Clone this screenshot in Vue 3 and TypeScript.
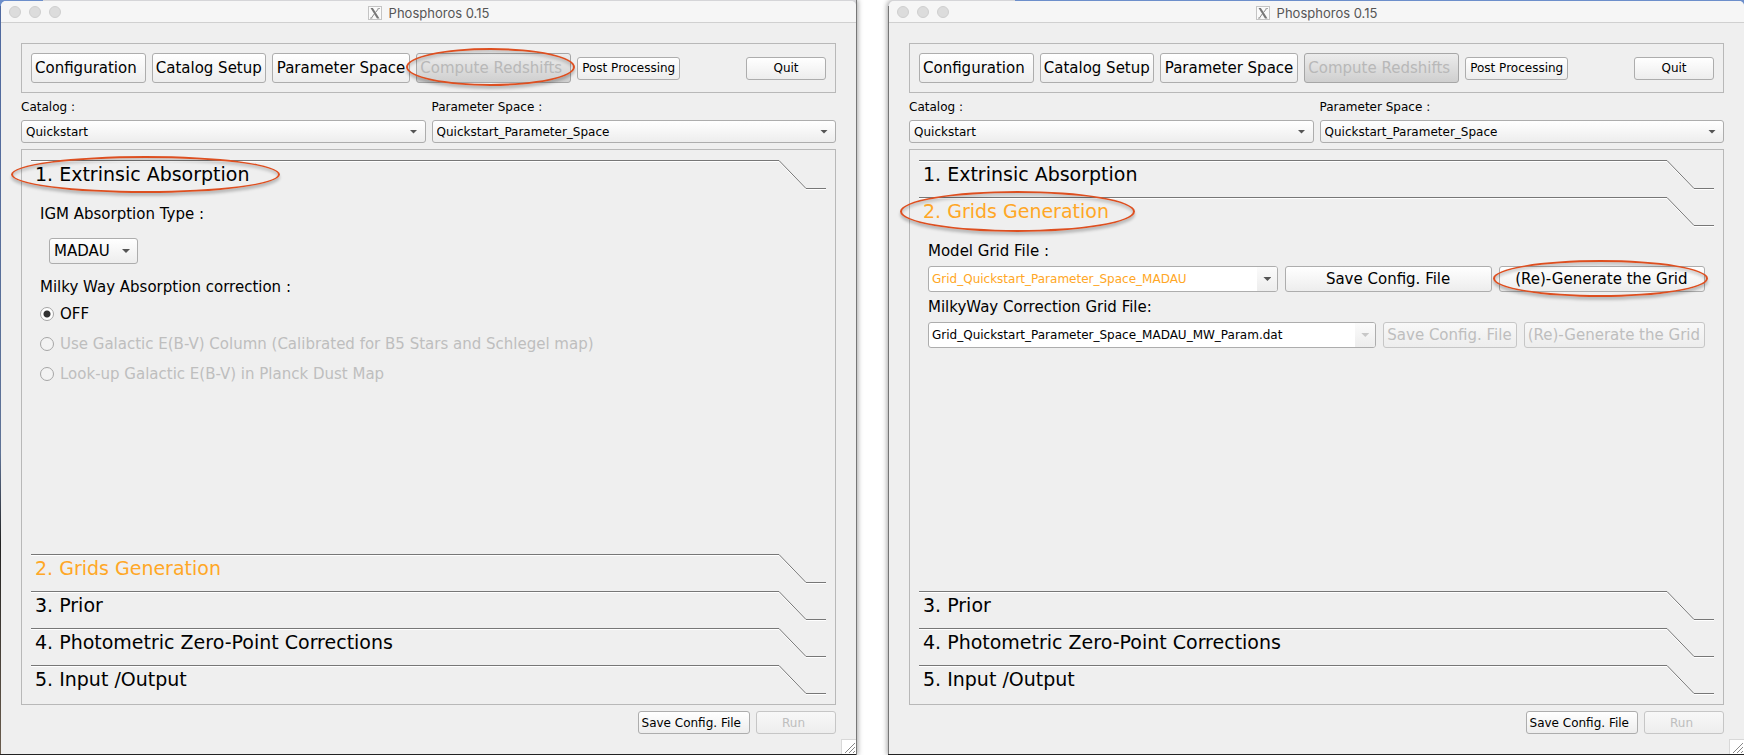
<script setup lang="ts">
import { reactive } from 'vue'

interface AppWindow {
  id: string
  open: number
  highlightNav: boolean
  igm: string
  milkyWay: string
}

const windows = reactive<AppWindow[]>([
  { id: 'left', open: 1, highlightNav: true, igm: 'MADAU', milkyWay: 'off' },
  { id: 'right', open: 2, highlightNav: false, igm: 'MADAU', milkyWay: 'off' },
])

const sections = [
  { n: 1, title: '1. Extrinsic Absorption', warn: false },
  { n: 2, title: '2. Grids Generation', warn: true },
  { n: 3, title: '3. Prior', warn: false },
  { n: 4, title: '4. Photometric Zero-Point Corrections', warn: false },
  { n: 5, title: '5. Input /Output', warn: false },
]

const corrections = [
  { value: 'off', label: 'OFF', disabled: false },
  { value: 'column', label: 'Use Galactic E(B-V) Column (Calibrated for B5 Stars and Schlegel map)', disabled: true },
  { value: 'planck', label: 'Look-up Galactic E(B-V) in Planck Dust Map', disabled: true },
]
</script>

<template>
  <main class="desktop">
    <div v-for="w in windows" :key="w.id" class="frame" :class="w.id">
      <section class="window" aria-label="Phosphoros 0.15">
        <header class="titlebar">
          <div class="lights">
            <button type="button" aria-label="Close"></button>
            <button type="button" aria-label="Minimize"></button>
            <button type="button" aria-label="Zoom"></button>
          </div>
          <div class="title">
            <svg width="14" height="14" viewBox="0 0 14 14" aria-hidden="true">
              <rect x="0.5" y="0.5" width="13" height="13" fill="#fafafa" stroke="#c4c4c4" />
              <path d="M2.5 2h2.4l6.6 10.500H9z" fill="#777" />
              <path d="M11 2 7.600 6.400M6.400 7.800 3 12.500" stroke="#888" fill="none" />
              <path d="M9.600 2.500h2.400M2 12h2.400" stroke="#aaa" />
            </svg>
            <span>Phosphoros 0.15</span>
          </div>
        </header>

        <div class="content">
          <nav class="toolbar">
            <button type="button" class="btn nav trail">Configuration</button>
            <button type="button" class="btn nav">Catalog Setup</button>
            <button type="button" class="btn nav roomy">Parameter Space</button>
            <div class="anchor">
              <button type="button" class="btn nav trail current" disabled>Compute Redshifts</button>
              <span v-if="w.highlightNav" class="ring ring-nav"></span>
            </div>
            <button type="button" class="btn small roomy">Post Processing</button>
            <button type="button" class="btn small wide quit">Quit</button>
          </nav>

          <div class="pickers">
            <div class="picker">
              <label :for="w.id + '-catalog'">Catalog :</label>
              <div class="select">
                <select :id="w.id + '-catalog'"><option>Quickstart</option></select>
              </div>
            </div>
            <div class="picker">
              <label :for="w.id + '-space'">Parameter Space :</label>
              <div class="select">
                <select :id="w.id + '-space'"><option>Quickstart_Parameter_Space</option></select>
              </div>
            </div>
          </div>

          <div class="toolbox">
            <template v-for="s in sections" :key="s.n">
              <button type="button" class="tab" :class="{ warn: s.warn }" :aria-expanded="w.open === s.n" @click="w.open = s.n">
                <span class="tab-title">{{ s.title }}</span>
                <svg class="tab-edge" width="48" height="30" viewBox="0 0 48 30" aria-hidden="true">
                  <path d="M0 1.5h1l27 28h20" stroke="#fff" fill="none" />
                  <path d="M0 .5h1l27 28h20" stroke="#777" fill="none" />
                </svg>
                <span v-if="w.open === s.n" class="ring" :class="'ring-tab' + s.n"></span>
              </button>

              <div v-if="w.open === s.n" class="page">
                <template v-if="s.n === 1">
                  <label class="text" :for="w.id + '-igm'">IGM Absorption Type :</label>
                  <div class="select igm">
                    <select :id="w.id + '-igm'" v-model="w.igm"><option>MADAU</option></select>
                  </div>
                  <fieldset class="radios">
                    <legend class="text">Milky Way Absorption correction :</legend>
                    <label v-for="c in corrections" :key="c.value" :class="{ off: c.disabled }">
                      <input v-model="w.milkyWay" type="radio" :name="w.id + '-mw'" :value="c.value" :disabled="c.disabled" />
                      {{ c.label }}
                    </label>
                  </fieldset>
                </template>

                <template v-else-if="s.n === 2">
                  <label class="text" :for="w.id + '-grid'">Model Grid File :</label>
                  <div class="row even">
                    <div class="combo">
                      <input :id="w.id + '-grid'" class="warn" type="text" value="Grid_Quickstart_Parameter_Space_MADAU" />
                      <button type="button" aria-label="Show model grid files"></button>
                    </div>
                    <button type="button" class="btn mid">Save Config. File</button>
                    <div class="anchor">
                      <button type="button" class="btn mid">(Re)-Generate the Grid</button>
                      <span class="ring ring-generate"></span>
                    </div>
                  </div>
                  <label class="text" :for="w.id + '-mwgrid'">MilkyWay Correction Grid File:</label>
                  <div class="row">
                    <div class="combo">
                      <input :id="w.id + '-mwgrid'" type="text" value="Grid_Quickstart_Parameter_Space_MADAU_MW_Param.dat" />
                      <button type="button" aria-label="Show correction grid files" disabled></button>
                    </div>
                    <button type="button" class="btn mid" disabled>Save Config. File</button>
                    <button type="button" class="btn mid" disabled>(Re)-Generate the Grid</button>
                  </div>
                </template>
              </div>
            </template>
          </div>

          <footer class="actions">
            <button type="button" class="btn small trail">Save Config. File</button>
            <button type="button" class="btn small wide trail" disabled>Run</button>
          </footer>
        </div>

        <svg class="grip" width="15" height="15" viewBox="0 0 15 15" aria-hidden="true">
          <rect width="15" height="15" fill="#fff" />
          <path d="M0 .5h15M.5 0v15" stroke="#d8d8d8" />
          <path d="M4 14 14 4M8 14l6-6M12 14l2-2" stroke="#888" fill="none" />
        </svg>
      </section>
    </div>
  </main>
</template>

<style>
body {
  margin: 0;
  background: #fff;
}
</style>

<style scoped>
* {
  box-sizing: border-box;
}

.desktop {
  display: grid;
  grid-template-columns: 1fr 1fr;
  gap: 32px;
  min-height: 100vh;
  font: 12px/16px "DejaVu Sans", sans-serif;
  color: #000;
}

button,
select,
input {
  margin: 0;
  font: inherit;
  color: inherit;
}

.frame {
  display: flex;
  padding: 1px 0 1px 1px;
  box-shadow: 1px 0 #777, 2px 0 5px rgba(0, 0, 0, 0.35);
}

.frame.left {
  background:
    linear-gradient(#222, #222) bottom / 100% 1px no-repeat,
    linear-gradient(90deg, #6d8fcb 43px, #d5d5d8 43px) top / 100% 6px no-repeat,
    linear-gradient(#4f69a0, #5f7396 60%, #222 72%, #6b5d4e);
}

.frame.right {
  background:
    linear-gradient(#222, #222) bottom / 100% 1px no-repeat,
    linear-gradient(90deg, #d5d5d8 127px, #6d8fcb 127px) top / 100% 6px no-repeat,
    #777;
  border-top-left-radius: 6px;
  box-shadow: -1px 0 5px rgba(0, 0, 0, 0.35);
}

.window {
  position: relative;
  flex: 1;
  display: flex;
  flex-direction: column;
  min-width: 0;
  background: #efefef;
  border-radius: 5px 5px 0 0;
}

.titlebar {
  display: grid;
  grid-template-columns: 1fr auto 1fr;
  align-items: center;
  height: 22px;
  background: #f6f6f6;
  border-bottom: 1px solid #d0d0d0;
  border-radius: 5px 5px 0 0;
}

.lights {
  display: flex;
  gap: 8px;
  padding-left: 8px;
}

.lights button {
  width: 12px;
  height: 12px;
  padding: 0;
  border: 1px solid #cfcfcf;
  border-radius: 50%;
  background: #dcdcdc;
}

.title {
  display: flex;
  align-items: center;
  gap: 7px;
  padding-top: 2px;
  font: 13px/16px Inter, sans-serif;
  color: #555;
}

.content {
  flex: 1;
  display: flex;
  flex-direction: column;
  padding: 20px;
}

.toolbar {
  display: flex;
  align-items: center;
  gap: 6px;
  height: 50px;
  padding: 0 9px;
  border: 1px solid #b8b8b8;
}

.btn {
  padding: 0 3px;
  border: 1px solid #adadad;
  border-radius: 3px;
  background: linear-gradient(#fff, #ededed);
  white-space: nowrap;
}

.btn:disabled {
  border-color: #c6c6c6;
  background: linear-gradient(#f8f8f8, #ededed);
  color: #bebebe;
}

.nav {
  height: 30px;
  font-size: 15px;
}

.trail {
  padding-right: 8px;
}

.roomy {
  padding: 0 4px;
}

.nav.current {
  border-color: #a6a6a6;
  background: linear-gradient(#ececec, #cfcfcf);
  color: #b8b8b8;
}

.small {
  height: 23px;
}

.mid {
  height: 26px;
  padding: 0 4px 0 3px;
  font-size: 15px;
}

.wide {
  width: 80px;
}

.quit {
  margin-left: auto;
}

.anchor {
  position: relative;
  display: grid;
}

.pickers {
  display: grid;
  grid-template-columns: 1fr 1fr;
  gap: 6px;
  margin-top: 6px;
}

.picker {
  display: grid;
  gap: 5px;
}

.select {
  position: relative;
  display: grid;
}

.select select {
  appearance: none;
  height: 23px;
  padding: 0 22px 0 4px;
  border: 1px solid #adadad;
  border-radius: 3px;
  background: linear-gradient(#fff, #ededed);
}

.select::after,
.combo button::after {
  content: "";
  width: 8px;
  height: 4px;
  background: #555;
  clip-path: polygon(0 0, 100% 0, 50% 100%);
}

.select::after {
  position: absolute;
  top: calc(50% - 2px);
  right: 8px;
  pointer-events: none;
}

.toolbox {
  flex: 1;
  display: flex;
  flex-direction: column;
  margin-top: 6px;
  padding: 10px 9px 2px;
  border: 1px solid #b8b8b8;
}

.tab {
  position: relative;
  display: flex;
  height: 37px;
  padding: 0;
  border: 0;
  background: none;
  text-align: left;
}

.tab-title {
  flex: 1;
  height: 26px;
  padding: 2px 4px 0;
  border-top: 1px solid #777;
  box-shadow: inset 0 1px #fff;
  font-size: 19px;
  line-height: 22px;
}

.warn {
  color: #ffa726;
}

.page {
  flex: 1;
  display: flex;
  flex-direction: column;
  align-items: stretch;
  gap: 6px;
  padding: 8px 9px 0;
  font-size: 15px;
}

.text {
  padding: 0;
  line-height: 18px;
}

.igm {
  align-self: flex-start;
  margin: 9px 0 8px 9px;
}

.igm select {
  width: 89px;
  height: 26px;
}

.radios {
  display: grid;
  margin: 0;
  padding: 0;
  border: 0;
}

.radios legend {
  margin: 1px 0 3px;
}

.radios label {
  display: flex;
  align-items: center;
  gap: 6px;
  height: 30px;
}

.radios .off {
  color: #bebebe;
}

.radios input {
  appearance: none;
  width: 14px;
  height: 14px;
  border: 1px solid #a6a6a6;
  border-radius: 50%;
  background: #fff;
}

.radios input:disabled {
  background: #f3f3f3;
}

.radios input:checked {
  background: radial-gradient(circle, #333 3px, #fff 4px);
}

.row {
  display: grid;
  grid-template-columns: 1fr auto auto;
  gap: 7px;
}

.row.even {
  grid-template-columns: 350fr 206fr 206fr;
}

.combo {
  display: flex;
  height: 26px;
  border: 1px solid #adadad;
  border-radius: 3px;
  background: #fff;
  overflow: hidden;
}

.combo input {
  flex: 1;
  min-width: 0;
  padding: 0 3px;
  border: 0;
  background: none;
  font-size: 12px;
}

.combo button {
  display: grid;
  place-items: center;
  width: 20px;
  padding: 0;
  border: 0;
  background: linear-gradient(#fbfbfb, #ededed);
}

.combo button:disabled::after {
  background: #c8c8c8;
}

.actions {
  display: flex;
  justify-content: flex-end;
  gap: 6px;
  margin-top: 6px;
}

.grip {
  position: absolute;
  right: 0;
  bottom: 0;
}

/* Annotation ellipses drawn over the controls they point at */
.ring {
  position: absolute;
  border: 2px solid #dd4f20;
  border-radius: 50%;
  box-shadow: 0 3px 3px rgba(0, 0, 0, 0.22), inset 0 3px 3px rgba(0, 0, 0, 0.16);
  pointer-events: none;
}

.ring-nav {
  inset: -5px -4px -3px -10px;
}

.ring-tab1 {
  top: -4px;
  left: -20px;
  width: 269px;
  height: 37px;
}

.ring-tab2 {
  top: -6px;
  left: -19px;
  width: 235px;
  height: 41px;
}

.ring-generate {
  inset: -6px -3px -5px -6px;
}
</style>
